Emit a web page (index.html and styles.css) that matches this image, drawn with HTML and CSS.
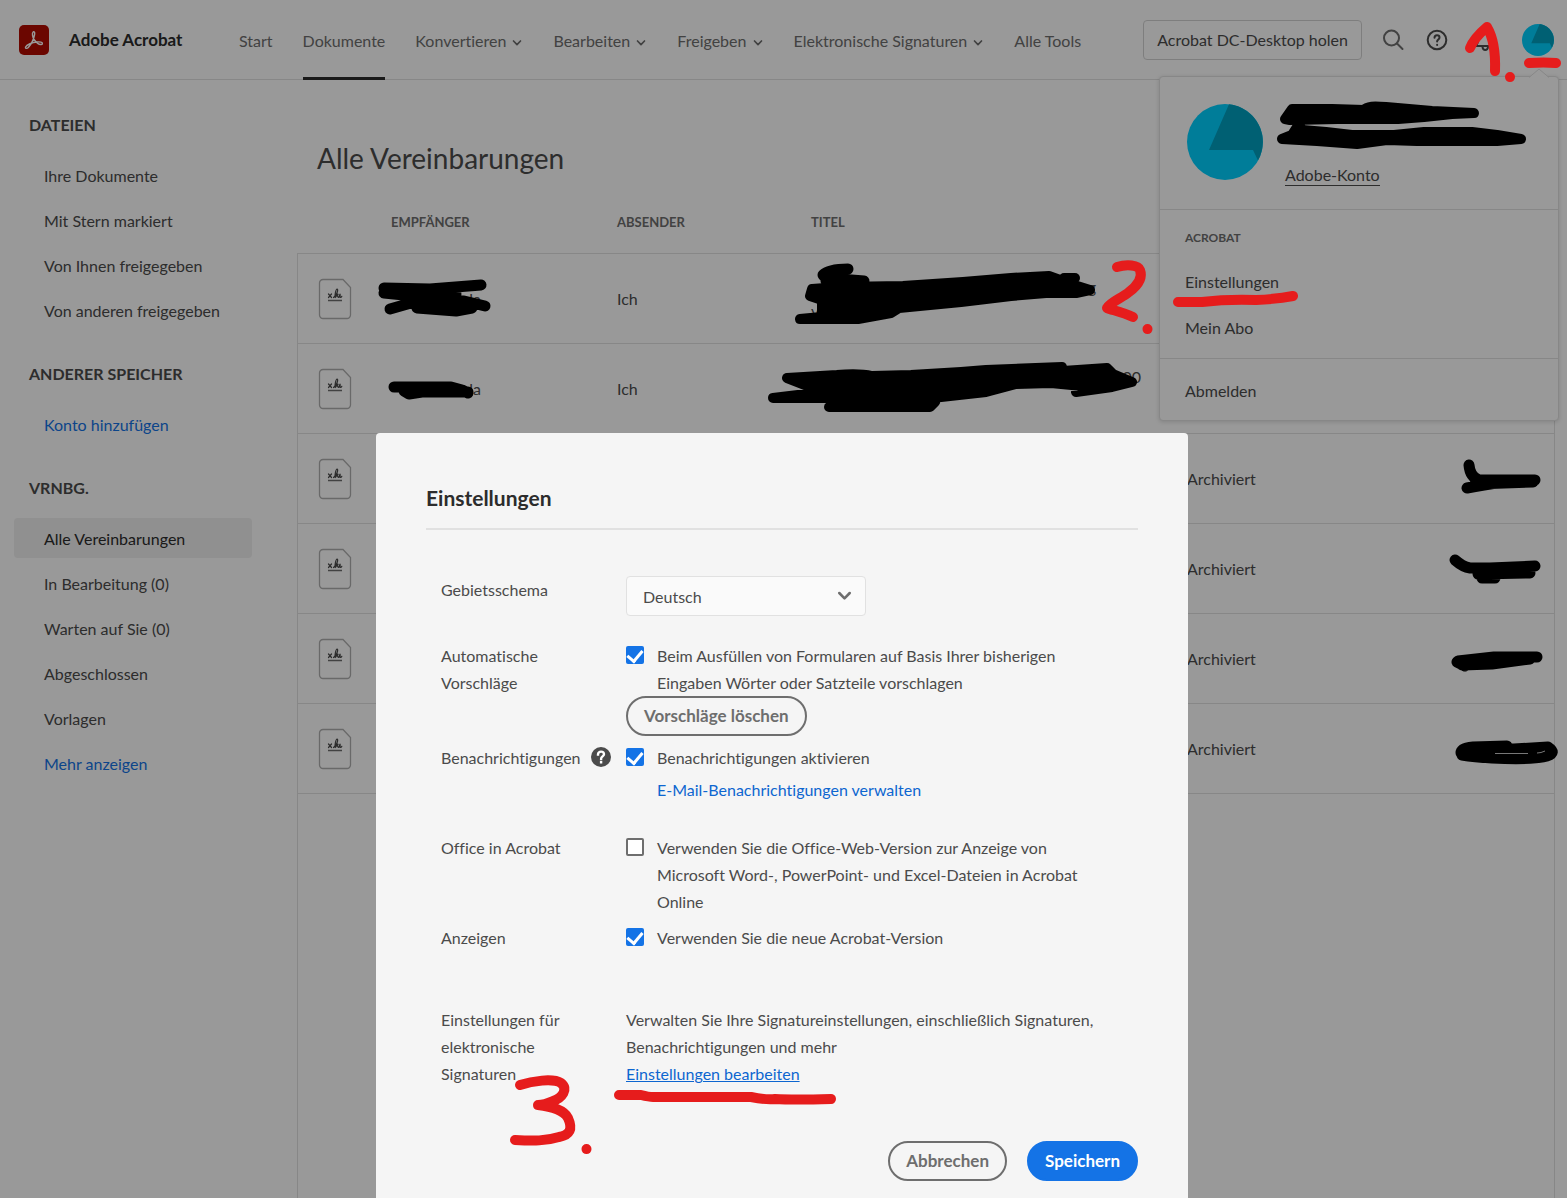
FILE: index.html
```html
<!DOCTYPE html>
<html lang="de">
<head>
    <meta charset="UTF-8">
    <meta name="viewport" content="width=device-width, initial-scale=1.0">
    <title>Adobe Acrobat</title>
    <link rel="stylesheet" href="styles.css">
</head>
<body>
    <svg class="symbols" aria-hidden="true">
        <symbol id="chevron" viewBox="0 0 10 8">
            <path d="M1.5 2l3.5 3.6L8.500 2" fill="none" stroke="currentColor" stroke-width="1.700" stroke-linecap="round" stroke-linejoin="round"/>
        </symbol>
        <symbol id="avatar" viewBox="0 0 76 76">
            <circle cx="38" cy="38" r="38" fill="#00d0ff"/>
            <path d="M42 .2L22 46h44l5 10.500A38 38 0 0 0 42 .2z" fill="#00a0c0"/>
        </symbol>
        <symbol id="sign-doc" viewBox="0 0 34 42">
            <path d="M5 1.500h20l7.500 8V37a3.500 3.500 0 0 1-3.500 3.500H5A3.500 3.500 0 0 1 1.500 37V5A3.500 3.500 0 0 1 5 1.500z" fill="none" stroke="#b0b0b0" stroke-width="1.300"/>
            <path d="M10 22.500h14" stroke="#6e6e6e" stroke-width="1.500"/>
            <path d="M10.500 16l3 3.500M13.500 16l-3 3.500M15.500 19.500c3-2 5.300-8 3.600-8.500-1.500 0-2.600 8-1.800 8.500.8-.2 1.500-3.600 2.500-3.400.9.300-1 1.600-.6 1.600.6.200.6 1.800 1.400 1.800s1-3.500 1.400-3.500-.3 3.500.5 3.500 1-.6 1.300-1.200" fill="none" stroke="#4b4b4b" stroke-width="1.200" stroke-linecap="round"/>
        </symbol>
    </svg>

    <header class="header">
        <svg class="logo" viewBox="0 0 30 30">
            <rect width="30" height="30" rx="5" fill="#b30b00"/>
            <path d="M14 7.200c.8-1.200 2.200-.2 1.600 2.300-.8 4.200-3.600 10-6.300 13-1.400 1.500-3.300.9-2.700-.5 1-2.400 6.500-4.600 11.500-5 3-.3 5.500.2 5.300 1.600-.2 1.300-2.800 1.200-4.700-.2-2.800-2-4.800-5.300-5.200-8.200-.2-1.400 0-2.400.5-3z" fill="none" stroke="#fff" stroke-width="1.400"/>
        </svg>
        <span class="brand">Adobe Acrobat</span>
        <nav class="nav">
            <a href="#">Start</a>
            <a href="#" class="active">Dokumente</a>
            <a href="#">Konvertieren <svg class="chevron"><use href="#chevron"/></svg></a>
            <a href="#">Bearbeiten <svg class="chevron"><use href="#chevron"/></svg></a>
            <a href="#">Freigeben <svg class="chevron"><use href="#chevron"/></svg></a>
            <a href="#">Elektronische Signaturen <svg class="chevron"><use href="#chevron"/></svg></a>
            <a href="#">Alle Tools</a>
        </nav>
        <div class="actions">
            <button class="desktop-btn">Acrobat DC-Desktop holen</button>
            <button class="icon-btn" aria-label="Suche">
                <svg viewBox="0 0 22 22" fill="none" stroke="#6e6e6e" stroke-width="2" stroke-linecap="round"><circle cx="9.500" cy="9" r="7.500"/><path d="M15 14.500l5.500 5.500"/></svg>
            </button>
            <button class="icon-btn" aria-label="Hilfe">
                <svg viewBox="0 0 22 22" fill="none" stroke="#4b4b4b" stroke-width="2" stroke-linecap="round"><circle cx="11" cy="11" r="9.300"/><path d="M8.500 8.700c0-3.400 5-3.200 5-.2 0 2-2.400 2-2.400 4"/><path d="M11.100 15.800v.2"/></svg>
            </button>
            <button class="icon-btn bell" aria-label="Mitteilungen">
                <svg viewBox="0 0 22 22" fill="none" stroke="#4b4b4b" stroke-width="2" stroke-linejoin="round"><path d="M2.500 17c2-2 3-4 3-8a5.500 5.500 0 0 1 11 0c0 4 1 6 3 8z"/><path d="M9.500 18c.5 4 5 4 5.500 0"/></svg>
            </button>
            <button class="icon-btn user" aria-label="Konto"><svg><use href="#avatar"/></svg></button>
        </div>
    </header>

    <div class="page">
        <aside class="sidebar">
            <section>
                <h2>DATEIEN</h2>
                <a href="#">Ihre Dokumente</a>
                <a href="#">Mit Stern markiert</a>
                <a href="#">Von Ihnen freigegeben</a>
                <a href="#">Von anderen freigegeben</a>
            </section>
            <section>
                <h2>ANDERER SPEICHER</h2>
                <a href="#" class="blue">Konto hinzufügen</a>
            </section>
            <section>
                <h2>VRNBG.</h2>
                <a href="#" class="selected">Alle Vereinbarungen</a>
                <a href="#">In Bearbeitung (0)</a>
                <a href="#">Warten auf Sie (0)</a>
                <a href="#">Abgeschlossen</a>
                <a href="#">Vorlagen</a>
                <a href="#" class="blue">Mehr anzeigen</a>
            </section>
        </aside>

        <main class="main">
            <h1>Alle Vereinbarungen</h1>
            <div class="list">
                <table>
                    <thead>
                        <tr>
                            <th class="col-icon"></th>
                            <th class="col-to">EMPFÄNGER</th>
                            <th class="col-from">ABSENDER</th>
                            <th class="col-title">TITEL</th>
                            <th class="col-status"></th>
                        </tr>
                    </thead>
                    <tbody>
                        <tr>
                            <td><svg class="doc"><use href="#sign-doc"/></svg></td>
                            <td><div class="name">da</div></td>
                            <td>Ich</td>
                            <td><div class="title"><span>21</span><span>g</span></div><div>v</div></td>
                            <td></td>
                        </tr>
                        <tr>
                            <td><svg class="doc"><use href="#sign-doc"/></svg></td>
                            <td><div class="name">da</div></td>
                            <td>Ich</td>
                            <td><div class="title long"><span></span><span>00</span></div><div>&nbsp;</div></td>
                            <td></td>
                        </tr>
                        <tr>
                            <td><svg class="doc"><use href="#sign-doc"/></svg></td>
                            <td></td>
                            <td></td>
                            <td></td>
                            <td>Archiviert</td>
                        </tr>
                        <tr>
                            <td><svg class="doc"><use href="#sign-doc"/></svg></td>
                            <td></td>
                            <td></td>
                            <td></td>
                            <td>Archiviert</td>
                        </tr>
                        <tr>
                            <td><svg class="doc"><use href="#sign-doc"/></svg></td>
                            <td></td>
                            <td></td>
                            <td></td>
                            <td>Archiviert</td>
                        </tr>
                        <tr>
                            <td><svg class="doc"><use href="#sign-doc"/></svg></td>
                            <td></td>
                            <td></td>
                            <td></td>
                            <td>Archiviert</td>
                        </tr>
                    </tbody>
                </table>
            </div>
        </main>
    </div>

    <div class="menu">
        <svg class="arrow" viewBox="0 0 22 10"><path d="M1 9.500L11 1l10 8.500" fill="#fff" stroke="#e1e1e1"/></svg>
        <div class="profile">
            <svg><use href="#avatar"/></svg>
            <a href="#">Adobe-Konto</a>
        </div>
        <div class="menu-group">
            <h3>ACROBAT</h3>
            <a href="#">Einstellungen</a>
            <a href="#">Mein Abo</a>
        </div>
        <div class="menu-group last">
            <a href="#">Abmelden</a>
        </div>
    </div>

    <div class="backdrop">
        <form class="modal" role="dialog" aria-labelledby="modal-title">
            <h2 id="modal-title">Einstellungen</h2>

            <div class="row locale">
                <label class="label" for="locale">Gebietsschema</label>
                <div class="select">
                    <select id="locale"><option>Deutsch</option></select>
                    <svg class="chevron"><use href="#chevron"/></svg>
                </div>
            </div>

            <div class="row suggest">
                <span class="label">Automatische Vorschläge</span>
                <div>
                    <label class="check"><input type="checkbox" checked><span>Beim Ausfüllen von Formularen auf Basis Ihrer bisherigen Eingaben Wörter oder Satzteile vorschlagen</span></label>
                    <button type="button" class="pill">Vorschläge löschen</button>
                </div>
            </div>

            <div class="row notify">
                <span class="label with-help">Benachrichtigungen
                    <svg viewBox="0 0 20 20"><circle cx="10" cy="10" r="10" fill="#4b4b4b"/><path d="M7 7.500c0-4 6-3.700 6-.3 0 2.200-2.900 2.200-2.900 4.600M10.100 15v.4" fill="none" stroke="#fff" stroke-width="2.400" stroke-linecap="square"/></svg>
                </span>
                <div>
                    <label class="check"><input type="checkbox" checked><span>Benachrichtigungen aktivieren</span></label>
                    <a href="#" class="mail-link">E-Mail-Benachrichtigungen verwalten</a>
                </div>
            </div>

            <div class="row office">
                <span class="label">Office in Acrobat</span>
                <label class="check"><input type="checkbox"><span>Verwenden Sie die Office-Web-Version zur Anzeige von Microsoft Word-, PowerPoint- und Excel-Dateien in Acrobat Online</span></label>
            </div>

            <div class="row display">
                <span class="label">Anzeigen</span>
                <label class="check"><input type="checkbox" checked><span>Verwenden Sie die neue Acrobat-Version</span></label>
            </div>

            <div class="row">
                <span class="label">Einstellungen für elektronische Signaturen</span>
                <div>
                    Verwalten Sie Ihre Signatureinstellungen, einschließlich Signaturen, Benachrichtigungen und mehr<br>
                    <a href="#" class="edit-link">Einstellungen bearbeiten</a>
                </div>
            </div>

            <div class="footer">
                <button type="button" class="pill">Abbrechen</button>
                <button type="submit" class="pill primary">Speichern</button>
            </div>
        </form>
    </div>

    <!-- hand-drawn marks -->
    <svg class="marks" width="1567" height="1198" aria-hidden="true">
        <g fill="#000" stroke="#000" stroke-width="10" stroke-linecap="round" stroke-linejoin="round">
            <path d="M1292 109l40 0 32 1c3-4 10-4 22-3l46 4 42 2-22 1-28 3-26 2-60 0-48 1-5-1z"/>
            <path d="M1299 124l3 6 24 2 26 3 42 0 30-3 48 0 25 3 24 4-24 2-80 0-30-1-30 4-40-3-35-2 10-4z"/>
            <path d="M812 289l-2 7 12 4 0 12 10 4-32 3 58 0 33-6 8-5 62-6 50-6 35-3 30 0 14-3-16-5-25-9-38 2-48 4-60 4-64 1z"/>
            <path d="M1064 278h11"/>
            <path d="M787 378l50-3c10-1 22-2 35 1l39-1 50-3 25-2 76-3 1 4 44-3 6 6 19 8-20 5-36 5 6-6-31-3-35 1-30 8-54 6 3 4-5 5h-101l14-9-70 0 50-6z"/>
        </g>
        <g fill="none" stroke="#000" stroke-width="11" stroke-linecap="round" stroke-linejoin="round">
            <path d="M384 288l46 1 51-4M384 293l30 3 20 3 22-5M390 309l28-8 46 0 21 5M396 291h50M417 308l39 3 16-3"/>
            <path d="M394 387h57l11 3 6 3M404 391l5 3 13-2h46M414 390h44"/>
            <path d="M848 269c-14 0-22 3-25 6l3 3 38 3M826 281h18"/>
            <path d="M1469 465q1 12 10 15h56M1467 488q16-3 36-6M1475 484l58-2"/>
            <path d="M1455 560q8 7 15 8h20l45-2M1478 574l52-1M1482 578h13"/>
            <path d="M1458 661l36-4 43 0M1462 665l30-1 38-5M1457 662l8 4"/>
            <path d="M1461 753q0-5 12-6l34-1M1462 755q12 2 30 3M1468 752h20M1492 748l22 1 34-2q9 6-1 9-14 4-55 2"/>
        </g>
        <path d="M1495 753.500h33M1537 753q4 0 8-2" fill="none" stroke="#777"/>
        <g fill="none" stroke="#e61c1c" stroke-width="10" stroke-linecap="round" stroke-linejoin="round">
            <path d="M1470 48q4-10 17-21 9 15 8 44"/>
            <path d="M1510 77v.1M1529 63q15-1 27 0"/>
            <path d="M1117 267c10-3 21-2 23 3 3 8-3 16-11 22-7 6-19 10-22 16 5 2 15 4 26 9"/>
            <path d="M1147.500 329v.1M1178 302l24 0q25-3 54-2 22-1 37-4"/>
            <path d="M520 1085c12-4 33-7 41-2 8 6 1 15-8 18-7 3-11 4-15 4 15 2 26 5 30 13 5 11 2 17-9 19-13 4-25 4-44 3"/>
            <path d="M586.500 1149v.1M619 1095h22q8 2 12 2h98q15 3 24 2 18 1 56 0"/>
        </g>
    </svg>
</body>
</html>
```
FILE: styles.css
```css
* {
    box-sizing: border-box;
}
body {
    margin: 0;
    min-height: 100vh;
    display: flex;
    flex-direction: column;
    background: #fff;
    color: #4b4b4b;
    font-family: Lato, "Noto Sans", sans-serif;
    font-variant-ligatures: none;
    font-size: 16px;
    line-height: 24px;
    position: relative;
    overflow-x: hidden;
}
a {
    color: inherit;
    text-decoration: none;
}
button {
    font: inherit;
    color: inherit;
    cursor: pointer;
}
.symbols {
    display: none;
}
.chevron {
    width: 10px;
    height: 8px;
}

/* header */
.header {
    display: flex;
    align-items: center;
    height: 80px;
    padding: 0 13px 0 19px;
    border-bottom: 1px solid #e1e1e1;
}
.logo {
    width: 30px;
    height: 30px;
    margin-right: 20px;
}
.brand {
    width: 140px;
    margin-right: 30px;
    font-size: 17px;
    font-weight: bold;
    color: #2c2c2c;
    white-space: nowrap;
}
.nav {
    display: flex;
    gap: 30px;
    color: #6e6e6e;
    white-space: nowrap;
}
.nav a {
    height: 80px;
    line-height: 82px;
    border-bottom: 3px solid transparent;
}
.nav a.active {
    border-color: #2c2c2c;
}
.nav .chevron {
    margin: 0 1px 0 2px;
}
.actions {
    display: flex;
    align-items: center;
    margin-left: auto;
}
.desktop-btn {
    height: 40px;
    padding: 0 13px;
    margin-right: 20px;
    background: none;
    border: 1px solid #d3d3d3;
    border-radius: 4px;
    white-space: nowrap;
}
.icon-btn {
    display: flex;
    width: 22px;
    height: 22px;
    padding: 0;
    margin-right: 22px;
    background: none;
    border: 0;
}
.icon-btn svg {
    width: 100%;
    height: 100%;
}
.icon-btn.bell {
    margin: 0 27px 0 3px;
}
.icon-btn.user {
    width: 32px;
    height: 32px;
    margin: 0;
}

/* sidebar */
.page {
    display: flex;
    flex: 1;
}
.sidebar {
    display: flex;
    flex-direction: column;
    gap: 34px;
    width: 297px;
    padding: 35px 45px 0 14px;
}
.sidebar section {
    display: flex;
    flex-direction: column;
    gap: 5px;
}
.sidebar h2 {
    margin: 0 0 15px 15px;
    font-size: 16px;
    line-height: 20px;
}
.sidebar a {
    height: 40px;
    padding-left: 30px;
    line-height: 41px;
    border-radius: 4px;
}
.sidebar a.blue {
    color: #1473e6;
}
.sidebar a.selected {
    background: #f0f0f0;
    color: #2c2c2c;
}

/* agreements */
.main {
    display: flex;
    flex-direction: column;
    flex: 1;
    padding: 60px 12px 0 0;
}
.main h1 {
    margin: 0 0 15px 20px;
    font-size: 28px;
    line-height: 36px;
    font-weight: normal;
}
.list {
    flex: 1;
    background: linear-gradient(#e1e1e1, #e1e1e1) 0 62px / 1px 100% no-repeat, linear-gradient(#e1e1e1, #e1e1e1) 100% 62px / 1px 100% no-repeat;
}
table {
    width: 100%;
    table-layout: fixed;
    border-collapse: collapse;
}
th {
    height: 62px;
    padding: 0;
    font-size: 13px;
    text-align: left;
    line-height: 20px;
    color: #6e6e6e;
}
td {
    height: 90px;
    padding: 2px 0 0;
    border-top: 1px solid #e1e1e1;
}
tbody tr:last-child td {
    border-bottom: 1px solid #e1e1e1;
}
td:first-child {
    padding-left: 21px;
}
.col-icon {
    width: 94px;
}
.col-to {
    width: 226px;
}
.col-from {
    width: 194px;
}
.col-title {
    width: 376px;
}
.doc {
    display: block;
    width: 34px;
    height: 42px;
}
.name {
    width: 90px;
    text-align: right;
}
.title {
    display: flex;
    justify-content: space-between;
    width: 285px;
    padding-left: 62px;
}
.title.long {
    width: 330px;
}

/* account menu */
.menu {
    position: absolute;
    top: 76px;
    right: 8px;
    width: 400px;
    background: #fff;
    border: 1px solid #e1e1e1;
    border-radius: 4px;
    box-shadow: 0 1px 4px rgba(0,0,0,0.15);
}
.arrow {
    position: absolute;
    top: -9px;
    right: 8px;
    width: 22px;
    height: 10px;
}
.profile {
    display: flex;
    align-items: flex-end;
    gap: 22px;
    height: 132px;
    padding: 0 27px 20px 27px;
}
.profile svg {
    width: 76px;
    height: 76px;
    margin-bottom: 9px;
}
.profile a {
    border-bottom: 1px solid #4b4b4b;
    line-height: 20px;
    margin-bottom: 3px;
}
.menu-group {
    display: flex;
    flex-direction: column;
    gap: 22px;
    padding: 17px 25px 18px;
    border-top: 1px solid #e1e1e1;
}
.menu-group.last {
    padding: 20px 25px 17px;
}
.menu-group h3 {
    margin: 0 0 -1px;
    font-size: 12px;
    line-height: 22px;
    color: #6e6e6e;
}

/* settings dialog */
.backdrop {
    position: fixed;
    inset: 0;
    display: flex;
    justify-content: center;
    align-items: flex-start;
    padding: 433px 3px 0 0;
    background: rgba(0,0,0,0.4);
    overflow: hidden;
}
.modal {
    width: 812px;
    padding: 50px;
    background: #f5f5f5;
    border-radius: 4px;
    line-height: 27px;
}
.modal h2 {
    margin: 0 0 46px;
    padding-bottom: 15px;
    border-bottom: 2px solid #e1e1e1;
    font-size: 21px;
    line-height: 30px;
    color: #2c2c2c;
}
.row {
    display: grid;
    grid-template-columns: 185px 1fr;
    padding-left: 15px;
}
.label {
    width: 150px;
}
.select {
    position: relative;
    width: 240px;
}
.select select {
    width: 100%;
    height: 40px;
    padding: 0 16px;
    appearance: none;
    background: #fafafa;
    border: 1px solid #e1e1e1;
    border-radius: 4px;
    font: inherit;
    color: inherit;
}
.select .chevron {
    position: absolute;
    right: 14px;
    top: 14px;
    width: 15px;
    height: 12px;
    color: #6e6e6e;
}
.locale {
    margin-bottom: 26px;
}
.check {
    display: flex;
    gap: 13px;
    max-width: 470px;
}
.check input {
    appearance: none;
    flex: none;
    width: 18px;
    height: 18px;
    margin: 4px 0 0;
    border: 2px solid #6e6e6e;
    border-radius: 2px;
    background: #fff;
}
.check input:checked {
    display: flex;
    justify-content: center;
    border: 0;
    background: #1473e6;
}
.check input:checked::before {
    content: "";
    width: 7px;
    height: 12px;
    margin-top: 1px;
    border: solid #fff;
    border-width: 0 3px 3px 0;
    transform: rotate(40deg);
}
.pill {
    height: 40px;
    padding: 0 16px 2px;
    border: 2px solid #6e6e6e;
    border-radius: 20px;
    background: none;
    color: #6e6e6e;
    font-size: 17px;
    font-weight: bold;
}
.pill.primary {
    background: #1473e6;
    border-color: #1473e6;
    color: #fff;
}
.suggest {
    margin-bottom: 8px;
}
.notify {
    margin-bottom: 31px;
}
.with-help {
    display: flex;
    justify-content: space-between;
    align-items: flex-start;
    width: 170px;
}
.with-help svg {
    width: 20px;
    height: 20px;
    margin-top: 3px;
}
.mail-link {
    display: block;
    margin: 5px 0 0 31px;
    color: #0d66d0;
}
.office {
    margin-bottom: 9px;
}
.display {
    margin-bottom: 55px;
}
.edit-link {
    color: #0d66d0;
    text-decoration: underline;
}
.footer {
    display: flex;
    justify-content: flex-end;
    gap: 20px;
    margin-top: 54px;
}

.marks {
    position: absolute;
    top: 0;
    left: 0;
    pointer-events: none;
}
```
